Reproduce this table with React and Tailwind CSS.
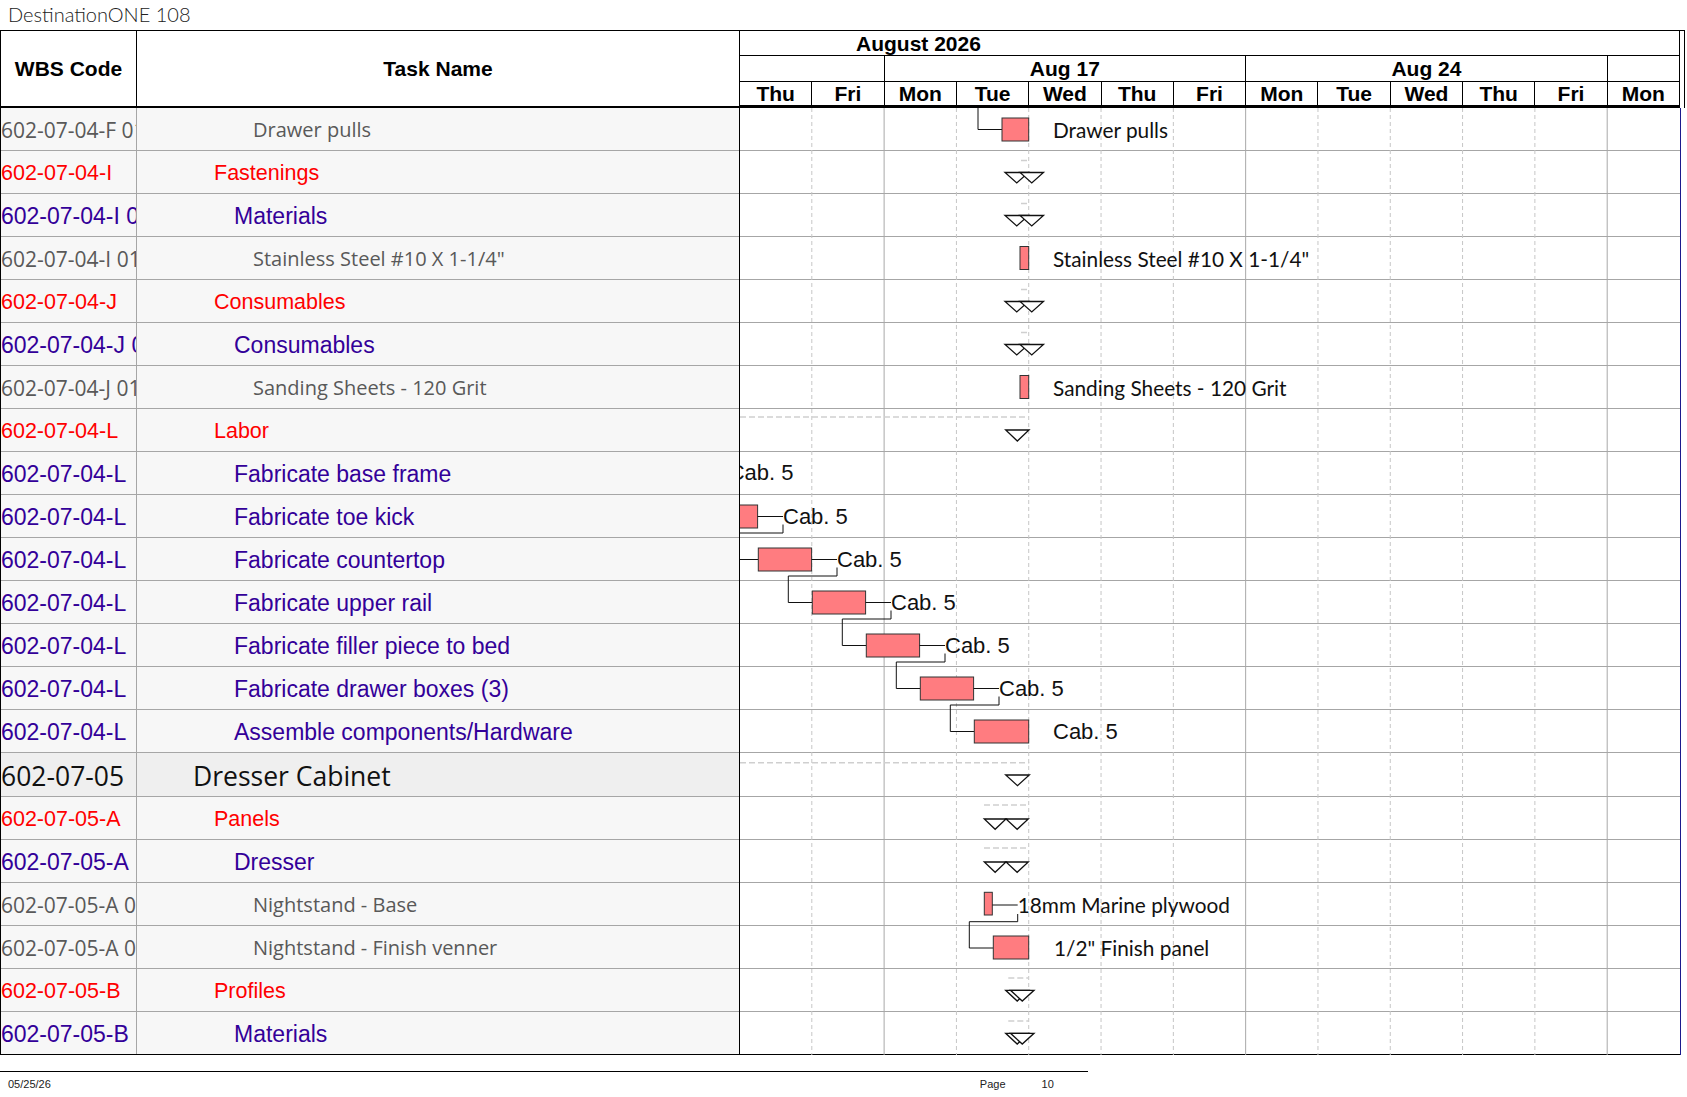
const rows = [
  { wbs: '602-07-04-F 0101', task: 'Drawer pulls', lvl: 3 },
  { wbs: '602-07-04-I', task: 'Fastenings', lvl: 1 },
  { wbs: '602-07-04-I 01', task: 'Materials', lvl: 2 },
  { wbs: '602-07-04-I 0101', task: 'Stainless Steel #10 X 1-1/4"', lvl: 3 },
  { wbs: '602-07-04-J', task: 'Consumables', lvl: 1 },
  { wbs: '602-07-04-J 01', task: 'Consumables', lvl: 2 },
  { wbs: '602-07-04-J 0101', task: 'Sanding Sheets - 120 Grit', lvl: 3 },
  { wbs: '602-07-04-L', task: 'Labor', lvl: 1 },
  { wbs: '602-07-04-L', task: 'Fabricate base frame', lvl: 2 },
  { wbs: '602-07-04-L', task: 'Fabricate toe kick', lvl: 2 },
  { wbs: '602-07-04-L', task: 'Fabricate countertop', lvl: 2 },
  { wbs: '602-07-04-L', task: 'Fabricate upper rail', lvl: 2 },
  { wbs: '602-07-04-L', task: 'Fabricate filler piece to bed', lvl: 2 },
  { wbs: '602-07-04-L', task: 'Fabricate drawer boxes (3)', lvl: 2 },
  { wbs: '602-07-04-L', task: 'Assemble components/Hardware', lvl: 2 },
  { wbs: '602-07-05', task: 'Dresser Cabinet', lvl: 0 },
  { wbs: '602-07-05-A', task: 'Panels', lvl: 1 },
  { wbs: '602-07-05-A', task: 'Dresser', lvl: 2 },
  { wbs: '602-07-05-A 0101', task: 'Nightstand - Base', lvl: 3 },
  { wbs: '602-07-05-A 0102', task: 'Nightstand - Finish venner', lvl: 3 },
  { wbs: '602-07-05-B', task: 'Profiles', lvl: 1 },
  { wbs: '602-07-05-B', task: 'Materials', lvl: 2 },
];

// per outline level: row height, background, text, task indent
const levels = {
  0: {
    h: 'h-[44px]',
    bg: 'bg-[#efefef]',
    code: "pt-[4px] font-['Open_Sans'] text-[26.5px] text-[#111]",
    text: "pt-[4px] font-['Open_Sans'] text-[26.5px] text-[#111]",
    pl: 'pl-[56px]',
    px: 44,
  },
  1: {
    h: 'h-[43px]',
    bg: 'bg-[#f7f7f7]',
    code: "pt-[4px] font-['Liberation_Sans'] text-[21.5px] text-[#ff0000]",
    text: "pt-[4px] font-['Liberation_Sans'] text-[21.5px] text-[#ff0000]",
    pl: 'pl-[77px]',
    px: 43,
  },
  2: {
    h: 'h-[43px]',
    bg: 'bg-[#f7f7f7]',
    code: "pt-[2px] font-['Liberation_Sans'] text-[23px] text-[#330099]",
    text: "pt-[2px] font-['Liberation_Sans'] text-[23px] text-[#330099]",
    pl: 'pl-[97px]',
    px: 43,
  },
  3: {
    h: 'h-[43px]',
    bg: 'bg-[#f7f7f7]',
    code: "pt-[2px] font-['Open_Sans'] text-[21px] text-[#595959]",
    text: "pt-[2px] font-['Open_Sans'] text-[20px] text-[#595959]",
    pl: 'pl-[116px]',
    px: 43,
  },
};

const days = ['Thu', 'Fri', 'Mon', 'Tue', 'Wed', 'Thu', 'Fri', 'Mon', 'Tue', 'Wed', 'Thu', 'Fri', 'Mon'];

const tops = [];
rows.reduce((y, r) => {
  tops.push(y);
  return y + levels[r.lvl].px;
}, 0);

const W = 940;
const H = tops[tops.length - 1] + 43;
const BAR = '#ff7c80';
const EDGE = '#333';
const LABEL = 'Lato, sans-serif';
const ARIAL = '"Liberation Sans", Arial, sans-serif';

const tri = (x1, x2, y, h) => `${x1},${y} ${x2},${y} ${(x1 + x2) / 2},${y + h}`;

const Label = ({ x, y, font = LABEL, size = 20.8, children }) => (
  <text x={x} y={y} fontFamily={font} fontSize={size} fill="#111" dominantBaseline="central">
    {children}
  </text>
);

const Bar = ({ x, y, w, h = 23 }) => (
  <rect x={x} y={y} width={w} height={h} fill={BAR} stroke={EDGE} strokeWidth="1" />
);

const Summary = ({ top, dash, tris }) => (
  <g>
    {dash && (
      <line
        x1={dash[0]}
        x2={dash[1]}
        y1={top + dash[2]}
        y2={top + dash[2]}
        stroke="#cfcfcf"
        strokeWidth="1.5"
        strokeDasharray="6 3"
      />
    )}
    {tris.map((t, i) => (
      <polygon key={i} points={tri(t[0], t[1], top + t[2], t[3])} fill="white" stroke="#111" strokeWidth="1.3" />
    ))}
  </g>
);

function Gantt() {
  const chain = [9, 10, 11, 12, 13];
  return (
    <svg width={W} height={H} className="absolute top-0 left-0 overflow-hidden">
      {Array.from({ length: 12 }, (_, k) => {
        const c = k + 1;
        const x = (c * W) / 13 - 0.5;
        const solid = c === 2 || c === 7 || c === 12;
        return (
          <line
            key={c}
            x1={x}
            x2={x}
            y1={0}
            y2={H}
            stroke={solid ? '#a8a8a8' : '#c6c6c6'}
            strokeDasharray={solid ? undefined : '4 3'}
          />
        );
      })}

      {/* drawer pulls */}
      <polyline points={`238,0 238,21.5 262,21.5`} fill="none" stroke="#111" />
      <Bar x={262} y={10} w={26.7} />
      <Label x={313} y={21}>Drawer pulls</Label>

      {[1, 2, 4, 5].map((ri) => (
        <Summary
          key={ri}
          top={tops[ri]}
          dash={[281, 287, 9.5]}
          tris={[
            [265, 288.5, 21.5, 10.5],
            [280, 303.5, 21.5, 10.5],
          ]}
        />
      ))}

      <Bar x={280} y={tops[3] + 9.5} w={8.7} />
      <Label x={313} y={tops[3] + 21}>Stainless Steel #10 X 1-1/4"</Label>
      <Bar x={280} y={tops[6] + 9.5} w={8.7} />
      <Label x={313} y={tops[6] + 21}>Sanding Sheets - 120 Grit</Label>

      <Summary top={tops[7]} dash={[0, 289, 8]} tris={[[265.7, 289, 21, 11]]} />

      <Label x={-11.3} y={tops[8] + 20} font={ARIAL} size={22}>
        Cab. 5
      </Label>

      {chain.map((ri, k) => {
        const L = -35.7 + 54 * k;
        const top = tops[ri];
        const mid = top + 21.5;
        return (
          <g key={ri}>
            <Bar x={L} y={top + 10} w={53.3} />
            <line x1={L + 53.3} x2={L + 78.7} y1={mid} y2={mid} stroke="#111" />
            <polyline
              points={`${L + 78.7},${mid + 8} ${L + 78.7},${top + 38} ${L + 30},${top + 38} ${L + 30},${top + 64.5} ${L + 54},${top + 64.5}`}
              fill="none"
              stroke="#111"
            />
            <Label x={L + 78.7} y={mid} font={ARIAL} size={22}>
              Cab. 5
            </Label>
          </g>
        );
      })}

      <Bar x={234.3} y={tops[14] + 10} w={54.4} />
      <Label x={313} y={tops[14] + 21.5} font={ARIAL} size={22}>
        Cab. 5
      </Label>

      <Summary top={tops[15]} dash={[0, 289.3, 9.7]} tris={[[265.7, 289.3, 22, 10.7]]} />
      {[16, 17].map((ri) => (
        <Summary
          key={ri}
          top={tops[ri]}
          dash={[244, 289, 8]}
          tris={[
            [244.3, 266, 22, 10.3],
            [266, 288.3, 22, 10.3],
          ]}
        />
      ))}

      <Bar x={244.3} y={tops[18] + 9.3} w={8} h={22.7} />
      <line x1={252.3} x2={277.7} y1={tops[18] + 22} y2={tops[18] + 22} stroke="#111" />
      <polyline
        points={`277.7,${tops[18] + 31} 277.7,${tops[18] + 38.7} 229.3,${tops[18] + 38.7} 229.3,${tops[19] + 22} 253.3,${tops[19] + 22}`}
        fill="none"
        stroke="#111"
      />
      <Label x={277.7} y={tops[18] + 21.5}>18mm Marine plywood</Label>

      <Bar x={253.3} y={tops[19] + 10} w={35.4} />
      <Label x={314} y={tops[19] + 21}>1/2" Finish panel</Label>

      {[20, 21].map((ri) => (
        <Summary
          key={ri}
          top={tops[ri]}
          dash={[268.3, 289, 9]}
          tris={[
            [265.7, 288.7, 21.3, 10.7],
            [270.5, 294, 21.3, 10.7],
          ]}
        />
      ))}
    </svg>
  );
}

export default function App() {
  return (
    <div className="w-[1687px] h-[1097px] bg-white overflow-hidden text-black">
      <div className="h-[30px] pl-[8px] pt-[2px] font-['Lato'] font-light text-[20px] leading-[24px] text-[#222]">
        DestinationONE 108
      </div>

      <div className="flex">
        {/* left table */}
        <div className="w-[740px] shrink-0 border-l border-r border-black">
          <div className="h-[78px] flex border-t border-b-2 border-black font-['Liberation_Sans'] font-bold text-[21px]">
            <div className="w-[136px] shrink-0 border-r border-black flex items-center justify-center">WBS Code</div>
            <div className="flex-1 flex items-center justify-center">Task Name</div>
          </div>
          {rows.map((r, i) => {
            const s = levels[r.lvl];
            const last = i === rows.length - 1;
            return (
              <div
                key={i}
                className={`flex ${s.h} ${s.bg} ${last ? 'border-b border-black' : 'border-b border-[#a6a6a6]'}`}
              >
                <div
                  className={`w-[136px] shrink-0 border-r border-[#a6a6a6] overflow-hidden whitespace-nowrap flex items-center leading-none ${s.code}`}
                >
                  {r.wbs}
                </div>
                <div className={`flex-1 flex items-center whitespace-nowrap overflow-hidden leading-none ${s.pl} ${s.text}`}>
                  {r.task}
                </div>
              </div>
            );
          })}
        </div>

        {/* chart */}
        <div className="w-[940px] shrink-0">
          <div className="h-[78px] flex flex-col border-t border-black font-['Liberation_Sans'] font-bold text-[21px] leading-none">
            <div className="h-[25px] border-b border-r border-black pl-[116px] flex items-center">August 2026</div>
            <div className="h-[26px] border-b border-black grid grid-cols-[repeat(13,minmax(0,1fr))]">
              <div className="col-span-2 border-r border-black" />
              <div className="col-span-5 border-r border-black flex items-center justify-center">Aug 17</div>
              <div className="col-span-5 border-r border-black flex items-center justify-center">Aug 24</div>
              <div className="border-r border-black" />
            </div>
            <div className="h-[26px] border-b-[3px] border-black grid grid-cols-[repeat(13,minmax(0,1fr))]">
              {days.map((d, i) => (
                <div key={i} className="border-r border-black flex items-center justify-center">
                  {d}
                </div>
              ))}
            </div>
          </div>
          <div className="relative">
            {rows.map((r, i) => {
              const s = levels[r.lvl];
              const last = i === rows.length - 1;
              return (
                <div key={i} className={`${s.h} ${last ? 'border-b border-black' : 'border-b border-[#a6a6a6]'}`} />
              );
            })}
            <Gantt />
          </div>
        </div>

        {/* right edge */}
        <div className="w-[6px] shrink-0 flex flex-col">
          <div className="h-[78px] w-[5px] border-t border-r border-black" />
          <div className="h-[947px] w-px bg-[#1a1a8c]" />
        </div>
      </div>

      <div className="mt-[16px] w-[1088px] h-px bg-black" />
      <div className="h-[24px] font-['Liberation_Sans'] text-[11px] text-[#222] flex items-center">
        <span className="ml-[8px]">05/25/26</span>
        <span className="ml-[929px]">Page</span>
        <span className="ml-[36px]">10</span>
      </div>
    </div>
  );
}
